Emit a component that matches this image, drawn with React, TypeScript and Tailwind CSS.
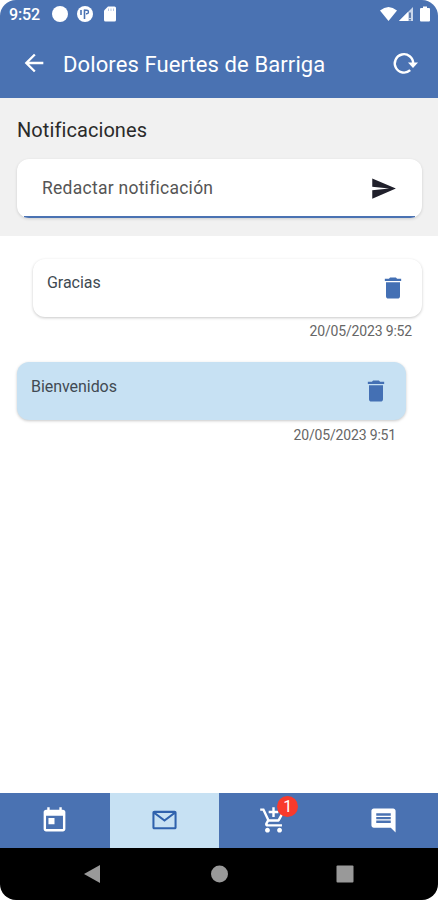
import React from 'react';

type TabId = 'agenda' | 'mail' | 'cart' | 'chat';

interface Notice {
  id: number;
  text: string;
  date: string;
  own: boolean;
}

const notices: Notice[] = [
  { id: 1, text: 'Gracias', date: '20/05/2023 9:52', own: true },
  { id: 2, text: 'Bienvenidos', date: '20/05/2023 9:51', own: false },
];

const tabs: { id: TabId; label: string; path: string; badge?: number }[] = [
  { id: 'agenda', label: 'Agenda', path: 'M19 3h-1V1h-2v2H8V1H6v2H5c-1.11 0-1.99.9-1.99 2L3 19c0 1.1.89 2 2 2h14c1.1 0 2-.9 2-2V5c0-1.1-.9-2-2-2zm0 16H5V8h14v11zM7 10h5v5H7z' },
  { id: 'mail', label: 'Notificaciones', path: 'M20.300 4H3.700C2.600 4 2 4.700 2 5.600v12.100c0 .9.6 1.600 1.700 1.600h16.600c1.100 0 1.700-.7 1.700-1.600V5.600C22 4.700 21.400 4 20.300 4zM18.900 5.700L12 10.900 5.100 5.700zM20.300 17.600H3.700V6.800l8.300 6.300 8.300-6.300z' },
  { id: 'cart', label: 'Pedidos', badge: 1, path: 'M11 9h2V6h3V4h-3V1h-2v3H8v2h3v3zm-4 9c-1.1 0-1.99.9-1.99 2S5.9 22 7 22s2-.9 2-2-.9-2-2-2zm10 0c-1.1 0-1.99.9-1.99 2s.89 2 1.99 2 2-.9 2-2-.9-2-2-2zm-9.83-3.25l.03-.12.9-1.63h7.45c.75 0 1.41-.41 1.75-1.03l3.86-7.01L19.42 4h-.01l-1.1 2-2.76 5H8.53l-.13-.27L6.16 6l-.95-2-.94-2H1v2h2l3.6 7.59-1.35 2.45c-.16.28-.25.61-.25.96 0 1.1.9 2 2 2h12v-2H7.42c-.13 0-.25-.11-.25-.25z' },
  { id: 'chat', label: 'Mensajes', path: 'M21.99 4c0-1.1-.89-2-1.99-2H4c-1.1 0-2 .9-2 2v12c0 1.1.9 2 2 2h14l4 4-.01-18zM18 14H6v-2h12v2zm0-3H6V9h12v2zm0-3H6V6h12v2z' },
];

const Icon: React.FC<{ path: string; className: string }> = ({ path, className }) => (
  <svg className={className} viewBox="0 0 24 24" fill="currentColor"><path d={path} /></svg>
);

const StatusBar: React.FC = () => (
  <div className="flex h-7 items-center justify-between pl-[9px] pr-[8px]">
    <div className="flex items-center">
      <span className="w-[43px] pt-[1px] text-[16px] font-medium leading-7 tracking-[-0.1px]">9:52</span>
      <span className="h-4 w-4 rounded-full bg-white" />
      <svg className="ml-[9px] h-4 w-4" viewBox="0 0 16 16">
        <circle cx="8" cy="8" r="8" fill="#fff" />
        <path d="M4 4v5M7.500 3.500v9.500" fill="none" stroke="#4a72b2" strokeWidth="1.600" />
        <path d="M7.500 4.300h2.300a1.700 1.700 0 010 3.400H9" fill="none" stroke="#4a72b2" strokeWidth="1.400" />
      </svg>
      <svg className="ml-[11px] h-4 w-3" viewBox="0 0 12 16">
        <path d="M4 .5h6.5Q12 .5 12 2v12q0 1.5-1.5 1.5h-9Q0 15.5 0 14V4.5z" fill="#fff" />
        <path d="M4.5 2.500v2.500M7 2.500v2.500M9.500 2.500v2.500" stroke="#b9c9e3" />
      </svg>
    </div>
    <div className="flex items-center">
      <svg className="h-4 w-[17px]" viewBox="0 0 17 16"><path d="M0 4.500Q8.500-2.500 17 4.500L8.500 15z" fill="#fff" /></svg>
      <svg className="ml-[1px] h-4 w-4" viewBox="0 0 16 16">
        <path d="M1 15L15 1v14z" fill="#c9d6ea" />
        <path d="M1 15L10 6v9z" fill="#fff" />
        <path d="M12 6.500v5.500M12 13v1.500" stroke="#3d5f98" strokeWidth="1.500" />
      </svg>
      <svg className="ml-[6px] h-4 w-[10px]" viewBox="0 0 10 16"><path d="M3 .5h4V2h2q1 0 1 1v11.500q0 1-1 1H1q-1 0-1-1V3q0-1 1-1h2z" fill="#fff" /></svg>
    </div>
  </div>
);

const NoticeCard: React.FC<{ notice: Notice }> = ({ notice }) => (
  <div className={`h-[103.5px] ${notice.own ? 'pl-[33px] pr-4' : 'pl-[17px] pr-8'}`}>
    <div className={`flex h-[58px] items-start justify-between rounded-[12px] pl-[14px] shadow-[0_1px_3px_rgba(0,0,0,0.22)] ${notice.own ? 'bg-white pr-[15px]' : 'bg-[#c7e1f3] pr-4'}`}>
      <span className="pt-[14.5px] text-[16px] leading-5 tracking-[-0.05px] text-[#414a52]">{notice.text}</span>
      <button className="mt-[15px]" aria-label="Borrar">
        <Icon className="h-7 w-7 text-[#4470b4]" path="M6 19c0 1.100.9 2 2 2h8c1.100 0 2-.9 2-2V7H6v12zM19 4h-3.500l-1-1h-5l-1 1H5v2h14V4z" />
      </button>
    </div>
    <p className="mt-[5.5px] pr-[10px] text-right text-[14px] leading-[18px] tracking-[-0.17px] text-[#666]">{notice.date}</p>
  </div>
);

const App: React.FC = () => {
  const [active, setActive] = React.useState<TabId>('mail');

  return (
    <div className="h-[900px] w-[438px] bg-white font-['Roboto',sans-serif]">
      <div className="flex h-full flex-col overflow-hidden rounded-[16px] bg-white">
        <header className="h-[98px] shrink-0 bg-[#4a72b2] text-white">
          <StatusBar />
          <div className="flex h-[70px] items-center pl-5 pr-5">
            <Icon className="h-7 w-7" path="M20 11H7.830l5.590-5.590L12 4l-8 8 8 8 1.410-1.410L7.830 13H20v-2z" />
            <h1 className="ml-[15px] flex-1 whitespace-nowrap pt-[3px] text-[22px] leading-7 tracking-[0.1px]">Dolores Fuertes de Barriga</h1>
            <svg className="h-6 w-[26px]" viewBox="0 0 26 24" fill="none">
              <path d="M18.200 19.200A9.200 9.200 0 1 1 21.200 12.500" stroke="#fff" strokeWidth="2.400" />
              <path d="M16 11.500h10L21 17z" fill="#fff" />
            </svg>
          </div>
        </header>

        <section className="h-[138px] shrink-0 bg-[#f1f1f1] px-[17px] pt-[18px]">
          <h2 className="text-[20px] leading-7 tracking-[0.08px] text-[#2a2a2a]">Notificaciones</h2>
          <div className="relative mt-[15px] flex h-[59px] w-[405px] items-center justify-between overflow-hidden rounded-[12px] bg-white pl-[25px] pr-[25px] shadow-[0_1px_3px_rgba(0,0,0,0.15)]">
            <span className="text-[17.5px] tracking-[0.26px] text-[#555]">Redactar notificación</span>
            <Icon className="h-[27px] w-[27px] text-[#20202b]" path="M2.010 21L23 12 2.010 3 2 10.500l15 1.500-15 1.500z" />
            <div className="absolute inset-x-[7px] bottom-0 h-[2px] bg-[#4a72b2]" />
          </div>
        </section>

        <main className="flex-1 pt-[22.5px]">
          {notices.map(n => <NoticeCard key={n.id} notice={n} />)}
        </main>

        <nav className="grid h-[55px] shrink-0 grid-cols-4">
          {tabs.map(tab => (
            <button
              key={tab.id}
              aria-label={tab.label}
              onClick={() => setActive(tab.id)}
              className={`flex items-center justify-center ${active === tab.id ? 'bg-[#c7e1f3] text-[#2f62ad]' : 'bg-[#4a72b2] text-white'}`}
            >
              <span className="relative">
                <Icon className="h-[29px] w-[29px]" path={tab.path} />
                {tab.badge && (
                  <span className="absolute -top-[10px] left-[18px] flex h-[21px] w-[21px] items-center justify-center rounded-full bg-[#f93a2c] text-[16px] leading-none text-white">{tab.badge}</span>
                )}
              </span>
            </button>
          ))}
        </nav>

        <footer className="h-[52px] shrink-0 bg-black">
          <svg className="h-[52px] w-[438px]" viewBox="0 0 438 52" fill="#999">
            <path d="M84 26L100 17v18z" />
            <circle cx="219.500" cy="26" r="8.500" />
            <rect x="336.500" y="17.500" width="17" height="17" rx="1" />
          </svg>
        </footer>
      </div>
    </div>
  );
};

export default App;
